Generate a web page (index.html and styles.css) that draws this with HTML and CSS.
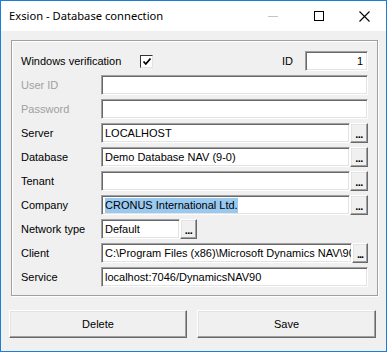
FILE: index.html
```html
<!DOCTYPE html>
<html>
<head>
<meta charset="utf-8">
<link rel="stylesheet" href="styles.css">
</head>
<body>
<div class="window">
  <div class="titlebar">
    <div class="title">Exsion - Database connection</div>
    <div class="controls">
      <span class="ctl min"><svg width="10" height="10" viewBox="0 0 10 10"><line x1="0" y1="5.5" x2="10" y2="5.5" stroke="#c4c4c4" stroke-width="1"/></svg></span>
      <span class="ctl max"><svg width="10" height="10" viewBox="0 0 10 10"><rect x="0.5" y="0.5" width="9" height="9" fill="none" stroke="#000" stroke-width="1"/></svg></span>
      <span class="ctl close"><svg width="11" height="11" viewBox="0 0 11 11"><path d="M0.5 0.5 L10.5 10.5 M10.5 0.5 L0.5 10.5" stroke="#000" stroke-width="1.1" fill="none"/></svg></span>
    </div>
  </div>
  <div class="content">
    <div class="group">
      <div class="form">
        <div class="first-row">
          <span class="label">Windows verification</span>
          <span class="checkbox"><svg width="10" height="10" viewBox="0 0 10 10"><path d="M1.5 4.5 L3.8 7 L8.5 1.5" stroke="#000" stroke-width="1.8" fill="none"/></svg></span>
          <span class="spacer"></span>
          <span class="label id-label">ID</span>
          <div class="box id-box">1</div>
        </div>

        <span class="label disabled">User ID</span>
        <div class="box"></div>

        <span class="label disabled">Password</span>
        <div class="box"></div>

        <span class="label">Server</span>
        <div class="field"><div class="box">LOCALHOST</div><span class="btn">...</span></div>

        <span class="label">Database</span>
        <div class="field"><div class="box">Demo Database NAV (9-0)</div><span class="btn">...</span></div>

        <span class="label">Tenant</span>
        <div class="field"><div class="box"></div><span class="btn">...</span></div>

        <span class="label">Company</span>
        <div class="field"><div class="box"><span class="sel">CRONUS International Ltd.</span></div><span class="btn">...</span></div>

        <span class="label">Network type</span>
        <div class="field net"><div class="box">Default</div><span class="btn">...</span></div>

        <span class="label">Client</span>
        <div class="field client"><div class="box">C:\Program Files (x86)\Microsoft Dynamics NAV\90\</div><span class="btn">...</span></div>

        <span class="label">Service</span>
        <div class="box">localhost:7046/DynamicsNAV90</div>
      </div>
    </div>
    <div class="actions">
      <button class="action">Delete</button>
      <button class="action">Save</button>
    </div>
  </div>
</div>
</body>
</html>
```

FILE: styles.css
```css
html, body {
  margin: 0;
  padding: 0;
  background: #f0f0f0;
}

.window {
  width: 387px;
  height: 352px;
  box-sizing: border-box;
  border: 1px solid #1c7fd6;
  display: flex;
  flex-direction: column;
  font-family: "Liberation Sans", Arial, sans-serif;
  font-size: 11px;
  color: #000;
}

.titlebar {
  height: 30px;
  background: #fff;
  display: flex;
  align-items: center;
  flex-shrink: 0;
}

.title {
  flex: 1;
  padding-left: 8px;
  font-family: "Noto Sans", "Open Sans", sans-serif;
  font-size: 11.2px;
  padding-bottom: 2px;
}

.controls {
  display: flex;
  align-items: center;
  height: 100%;
}

.ctl {
  width: 46px;
  height: 100%;
  display: flex;
  align-items: center;
  justify-content: center;
}

.ctl.min { padding-bottom: 1px; }
.ctl.close { width: 44px; }

.content {
  flex: 1;
  background: #f0f0f0;
  padding: 9px 9px 0 8px;
  display: flex;
  flex-direction: column;
}

.group {
  margin-left: 2px;
  border: 1px solid #a0a0a0;
  box-shadow: inset 1px 1px 0 #fff, 1px 1px 0 #fff;
  padding: 10px 9px 0 9px;
  box-sizing: border-box;
  width: 367px;
  height: 256px;
}

.form {
  display: grid;
  grid-template-columns: 80px 1fr;
  grid-auto-rows: 20px;
  row-gap: 4px;
  align-items: center;
}

.first-row {
  grid-column: 1 / 3;
  display: flex;
  align-items: center;
  height: 20px;
}

.first-row .label {
  width: 119px;
}

.label {
  white-space: nowrap;
  line-height: 20px;
}

.label.disabled {
  color: #a0a0a0;
}

.checkbox {
  width: 11px;
  height: 11px;
  background: #fff;
  border: 1px solid #333;
  border-right-color: #e3e3e3;
  border-bottom-color: #e3e3e3;
  display: flex;
  align-items: center;
  justify-content: center;
  margin-top: 1px;
}

.spacer { flex: 1; }

.first-row .id-label {
  width: auto;
  margin-right: 12px;
}

.box {
  height: 20px;
  box-sizing: border-box;
  background: #fff;
  border: 1px solid;
  border-color: #a0a0a0 #fff #fff #a0a0a0;
  box-shadow: inset 1px 1px 0 #696969, inset -1px -1px 0 #e3e3e3;
  padding: 0 3px 0 3px;
  line-height: 18px;
  white-space: nowrap;
  overflow: hidden;
  min-width: 0;
}

.id-box {
  width: 63px;
  text-align: right;
  padding-right: 4px;
}

.field {
  display: flex;
  height: 20px;
  min-width: 0;
}

.field .box {
  flex: 1;
}

.btn {
  width: 18px;
  height: 20px;
  box-sizing: border-box;
  flex-shrink: 0;
  background: #f0f0f0;
  border: 1px solid;
  border-color: #fff #696969 #696969 #fff;
  box-shadow: inset -1px -1px 0 #a0a0a0, inset 1px 1px 0 #e3e3e3;
  font-weight: bold;
  text-align: center;
  line-height: 20px;
  font-size: 11px;
  letter-spacing: -0.5px;
  overflow: hidden;
}

.field.net {
  width: 96px;
}

.field.net .btn {
  width: 17px;
}

.field.client .btn {
  width: 16px;
  letter-spacing: -1px;
}

.sel {
  background: #99c9ef;
  padding: 1px 0 2px 0;
}

.actions {
  display: flex;
  gap: 10px;
  margin-top: 14px;
}

.action {
  height: 28px;
  width: 178px;
  box-sizing: border-box;
  background: #f0f0f0;
  border: 1px solid;
  border-color: #fff #696969 #696969 #fff;
  box-shadow: inset -1px -1px 0 #a0a0a0, inset 1px 1px 0 #e3e3e3;
  font-family: "Liberation Sans", Arial, sans-serif;
  font-size: 11px;
  color: #000;
  padding: 0;
}

.action + .action {
  width: 179px;
}
```
